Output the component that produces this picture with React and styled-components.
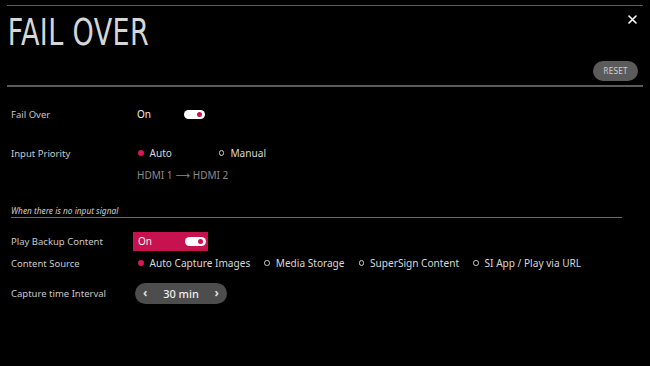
import React from "react"
import styled, { createGlobalStyle } from "styled-components"

const Global = createGlobalStyle`
  html, body { margin: 0; padding: 0; background: #000; }
  body { font-family: "Noto Sans", "Open Sans", sans-serif; }
`

const Screen = styled.div`
  width: 650px;
  height: 366px;
  background: #000;
  box-sizing: border-box;
  padding: 5px 7px 0 7px;
  overflow: hidden;
`

const Header = styled.div`
  border-top: 1px solid #5a5a5a;
  border-bottom: 2px solid #5a5a5a;
  height: 79px;
  display: grid;
  grid-template-columns: 1fr auto;
`

const Title = styled.h1`
  margin: 0;
  padding: 4px 0 0 1px;
  font-family: "DejaVu Sans Condensed", sans-serif;
  font-weight: 400;
  font-size: 38px;
  letter-spacing: 0.5px;
  color: #d6d6d6;
  line-height: 44px;
  transform: scaleX(0.79);
  transform-origin: left top;
`

const HeadSide = styled.div`
  display: flex;
  flex-direction: column;
  align-items: flex-end;
  justify-content: space-between;
  padding: 8px 5px 4px 0;
`

const Close = styled.button`
  background: none;
  border: none;
  padding: 0;
  width: 11px;
  height: 11px;
  display: flex;
  cursor: pointer;
`

const ResetBtn = styled.button`
  width: 45px;
  height: 20px;
  border: none;
  border-radius: 10px;
  background: #5b5b5b;
  color: #d0d0d0;
  font-family: "DejaVu Sans Condensed", sans-serif;
  font-size: 8px;
  padding: 0;
  letter-spacing: 0.2px;
`

const Body = styled.div`
  padding: 0 0 0 4px;
`

const Row = styled.div`
  display: grid;
  grid-template-columns: 126px 1fr;
  align-items: center;
  height: ${(p) => p.h || 20}px;
  margin-top: ${(p) => p.mt || 0}px;
`

const Label = styled.div`
  color: #c8c8c8;
  font-size: 9.5px;
`

const Value = styled.div`
  display: flex;
  align-items: center;
  gap: ${(p) => p.gap || 0}px;
  color: #e0e0e0;
  font-size: 10px;
`

const OnText = styled.span`
  width: 47px;
  color: #eee;
  font-size: 10px;
`

const Toggle = styled.span`
  width: 21px;
  height: 9px;
  border-radius: 5px;
  background: #fff;
  position: relative;
  &::after {
    content: "";
    position: absolute;
    right: 3px;
    top: 2px;
    width: 5px;
    height: 5px;
    border-radius: 50%;
    background: #c8124f;
  }
`

const PinkBox = styled.div`
  width: 75px;
  height: 19px;
  background: #c8124f;
  display: flex;
  align-items: center;
  padding-left: 5px;
  box-sizing: border-box;
  margin-left: -4px;
`

const Radio = styled.span`
  display: inline-flex;
  align-items: center;
  color: #d8d8d8;
  font-size: 10.1px;
  &::before {
    content: "";
    width: 3.5px;
    height: 3.5px;
    border-radius: 50%;
    margin: 0 6px 0 1px;
    ${(p) =>
      p.on
        ? "background: #e0165c; border: 1.5px solid #e0165c;"
        : "background: #000; border: 1.5px solid #cfcfcf;"}
  }
`

const Sub = styled.div`
  color: #8c8c8c;
  font-size: 10px;
  padding-left: 126px;
  height: 20px;
  display: flex;
  align-items: center;
  margin-top: 2px;
`

const ArrowGlyph = styled.span`
  font-family: "DejaVu Sans", sans-serif;
  margin: 0 3px;
`

const Section = styled.div`
  margin: 20px 21px 0 0;
  border-bottom: 1px solid #6a6a6a;
  color: #cfcfcf;
  font-size: 8.3px;
  font-style: italic;
  padding-bottom: 1px;
`

const Stepper = styled.div`
  width: 92px;
  height: 21px;
  border-radius: 11px;
  background: #4d4d4d;
  margin-left: -2px;
  display: flex;
  align-items: center;
  justify-content: space-between;
  padding: 0 8px;
  box-sizing: border-box;
  color: #eee;
  font-size: 11px;
  font-weight: 500;
`

const Arrow = styled.span`
  font-size: 12px;
  font-weight: 700;
  color: #ddd;
  line-height: 1;
`

export default function App() {
  return (
    <Screen>
      <Global />
      <Header>
        <Title>FAIL OVER</Title>
        <HeadSide>
          <Close aria-label="close">
            <svg width="11" height="11" viewBox="0 0 11 11">
              <path d="M2 2 L9 9 M9 2 L2 9" stroke="#fff" strokeWidth="1.6" strokeLinecap="round" />
            </svg>
          </Close>
          <ResetBtn>RESET</ResetBtn>
        </HeadSide>
      </Header>
      <Body>
        <Row mt={17}>
          <Label>Fail Over</Label>
          <Value>
            <OnText>On</OnText>
            <Toggle />
          </Value>
        </Row>
        <Row mt={19}>
          <Label>Input Priority</Label>
          <Value gap={46}>
            <Radio on>Auto</Radio>
            <Radio>Manual</Radio>
          </Value>
        </Row>
        <Sub>
          HDMI 1<ArrowGlyph>⟶</ArrowGlyph>HDMI 2
        </Sub>
        <Section>When there is no input signal</Section>
        <Row mt={13}>
          <Label>Play Backup Content</Label>
          <Value>
            <PinkBox>
              <OnText>On</OnText>
              <Toggle />
            </PinkBox>
          </Value>
        </Row>
        <Row mt={2}>
          <Label>Content Source</Label>
          <Value gap={13}>
            <Radio on>Auto Capture Images</Radio>
            <Radio>Media Storage</Radio>
            <Radio>SuperSign Content</Radio>
            <Radio>SI App / Play via URL</Radio>
          </Value>
        </Row>
        <Row mt={9} h={22}>
          <Label>Capture time Interval</Label>
          <Value>
            <Stepper>
              <Arrow>‹</Arrow>
              <span>30 min</span>
              <Arrow>›</Arrow>
            </Stepper>
          </Value>
        </Row>
      </Body>
    </Screen>
  )
}
